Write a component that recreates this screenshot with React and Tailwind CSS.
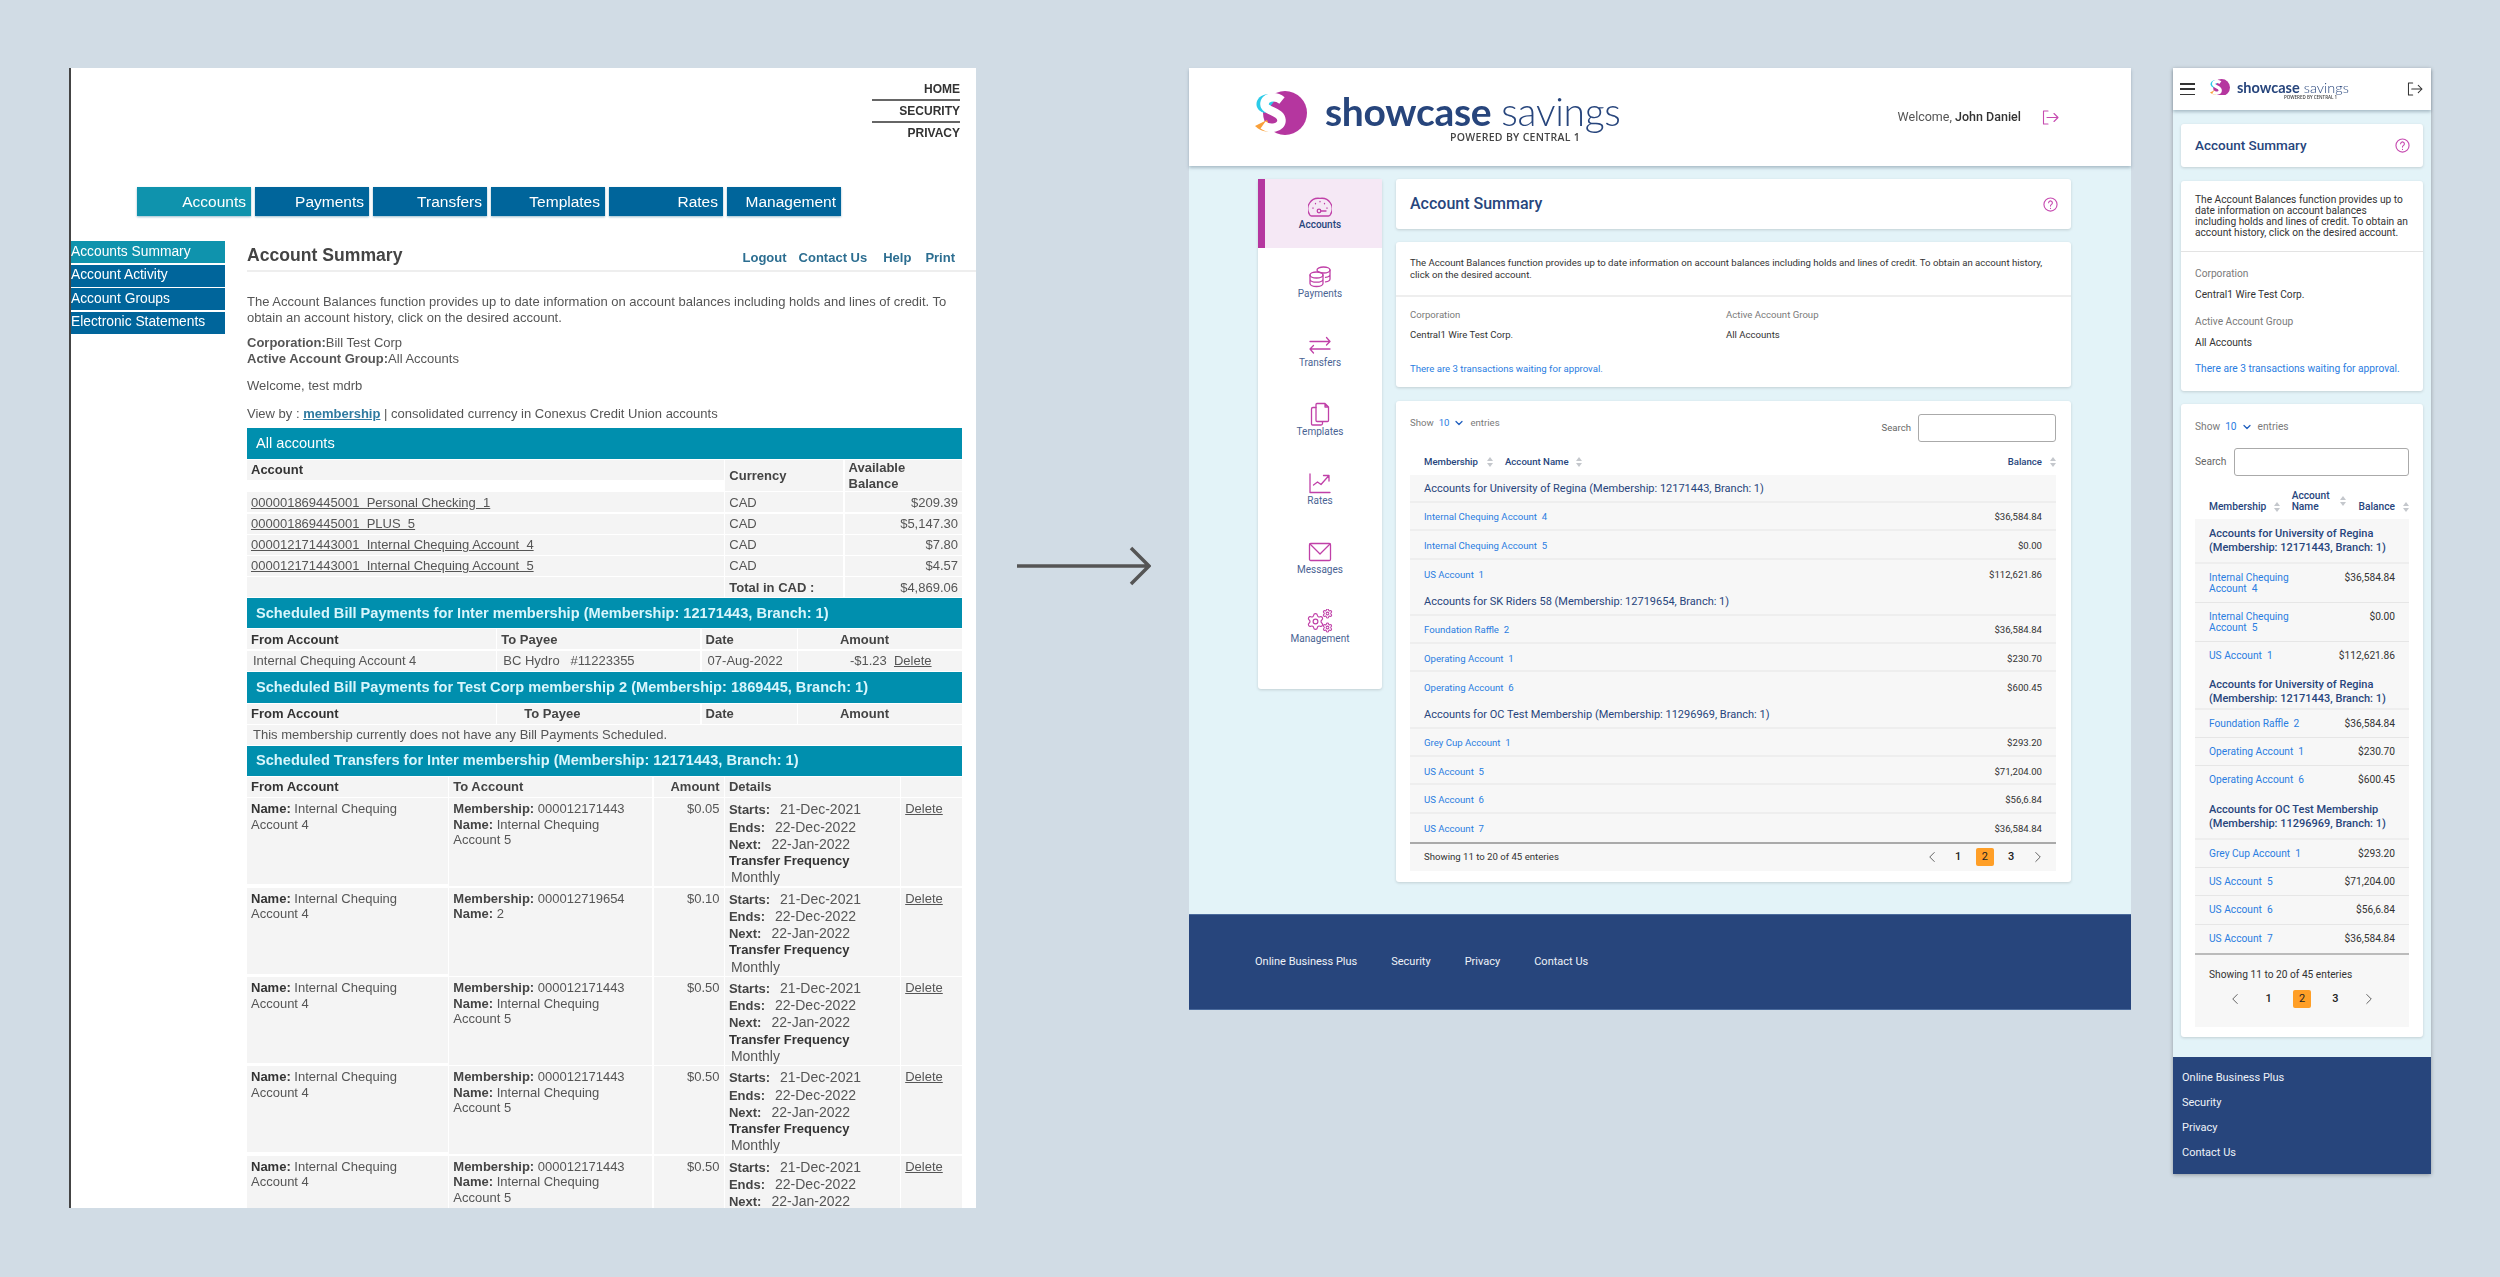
import React from 'react';
import { Settings, ChevronLeft, ChevronRight, ChevronDown } from 'lucide-react';

// accounts shown in both the desktop and the phone layout
const groups = [
  { title: 'Accounts for University of Regina (Membership: 12171443, Branch: 1)', rows: [['Internal Chequing Account  4', '$36,584.84'], ['Internal Chequing Account  5', '$0.00'], ['US Account  1', '$112,621.86']] },
  { title: 'Accounts for SK Riders 58 (Membership: 12719654, Branch: 1)', mobileTitle: 'Accounts for University of Regina (Membership: 12171443, Branch: 1)', rows: [['Foundation Raffle  2', '$36,584.84'], ['Operating Account  1', '$230.70'], ['Operating Account  6', '$600.45']] },
  { title: 'Accounts for OC Test Membership (Membership: 11296969, Branch: 1)', rows: [['Grey Cup Account  1', '$293.20'], ['US Account  5', '$71,204.00'], ['US Account  6', '$56,6.84'], ['US Account  7', '$36,584.84']] },
];

const transfers = [
  { to: '000012171443', name: 'Internal Chequing Account 5', amount: '$0.05' },
  { to: '000012719654', name: '2', amount: '$0.10' },
  { to: '000012171443', name: 'Internal Chequing Account 5', amount: '$0.50' },
  { to: '000012171443', name: 'Internal Chequing Account 5', amount: '$0.50' },
  { to: '000012171443', name: 'Internal Chequing Account 5', amount: '$0.50' },
];

function Logo({ width }) {
  return (
    <svg width={width} viewBox="0 0 52 44" className="shrink-0">
      <circle cx="30" cy="22" r="22" fill="#b5369f" />
      <path d="M14 3C6 3 1 8 1.500 14C2 18 5 21 10 22L21 8Z" fill="#2bcbe8" />
      <path d="M0 35C3 38 8 41 17 41L12 29Z" fill="#f9a03a" />
      <path d="M27 9.500C20 4 9 6 9.500 13.500C10 20.500 26 20 26.500 29C27 37 15 39 8 34" fill="none" stroke="#fff" strokeWidth="8.500" />
    </svg>
  );
}

function NavIcon({ name }) {
  const common = { width: 24, height: 24, viewBox: '0 0 24 24', fill: 'none', stroke: '#c040a8', strokeWidth: 1.3, strokeLinecap: 'round', strokeLinejoin: 'round' };
  if (name === 'Accounts') return (
    <svg {...common}>
      <path d="M3.500 21a2 2 0 0 1-2-1.600 10.500 10.500 0 0 1 10.500-16 10.500 10.500 0 0 1 10.500 16 2 2 0 0 1-2 1.600z" />
      <circle cx="11" cy="16" r="1.800" />
      <path d="M12.800 16H18M12 6.500v.3M7.500 8.500v.3M16.500 8.500v.3M5 13v.3M19 13v.3" />
    </svg>
  );
  if (name === 'Payments') return (
    <svg {...common}>
      <ellipse cx="15.500" cy="6" rx="6.500" ry="3" />
      <path d="M22 6v9c0 1.500-2 2.600-4.500 2.900M22 10.500c0 1.500-2 2.600-4.500 2.900" />
      <ellipse cx="8.500" cy="11" rx="6.500" ry="3" />
      <path d="M2 11v8.500c0 1.700 3 3 6.500 3s6.500-1.300 6.500-3V11M2 15.200c0 1.700 3 3 6.500 3s6.500-1.300 6.500-3" />
    </svg>
  );
  if (name === 'Transfers') return (
    <svg {...common}>
      <path d="M2 8.500h20M18.500 4.500l3.500 4-3.500 3.500M22 16H2M5.500 12.500L2 16l3.500 4" />
    </svg>
  );
  if (name === 'Templates') return (
    <svg {...common}>
      <path d="M9 1.500h8l3.500 3.500v13.500a1 1 0 0 1-1 1H9a1 1 0 0 1-1-1v-16a1 1 0 0 1 1-1zM17 1.500V5h3.500" />
      <path d="M8 5.500H5a1.500 1.500 0 0 0-1.500 1.500v15a1 1 0 0 0 1 1H13a1.500 1.500 0 0 0 1.500-1.500V20" />
    </svg>
  );
  if (name === 'Rates') return (
    <svg {...common}>
      <path d="M2 3v18.500h20M5.500 14l4-3 3.500 2.500L20.500 5M15.500 4.500h5.500V10" />
    </svg>
  );
  if (name === 'Messages') return (
    <svg {...common}>
      <rect x="1.500" y="3.500" width="21" height="17" rx="1.200" />
      <path d="M2 4l10 10 10-10" />
    </svg>
  );
  return (
    <svg {...common} width={28} viewBox="0 0 28 24">
      <Settings x="0" y="3" width="19" height="19" strokeWidth="1.500" stroke="#c040a8" />
      <Settings x="16" y="-1" width="11" height="11" strokeWidth="2.200" stroke="#c040a8" />
      <Settings x="16" y="13" width="11" height="11" strokeWidth="2.200" stroke="#c040a8" />
    </svg>
  );
}

function HelpIcon() {
  return (
    <svg width="15" height="15" viewBox="0 0 24 24" fill="none" stroke="#c64bb0" strokeWidth="1.800" strokeLinecap="round">
      <circle cx="12" cy="12" r="10.500" />
      <path d="M9 9.300a3 3 0 1 1 4.600 2.500c-1 .7-1.600 1.300-1.600 2.700M12 18v.2" />
    </svg>
  );
}

function LogoutIcon({ color, width, height }) {
  return (
    <svg width={width} height={height} viewBox="0 0 17 15" fill="none" stroke={color} strokeWidth="1.100" strokeLinecap="round" strokeLinejoin="round">
      <path d="M6 1H1.500v13H6M5 7.500h11M12 3.500l4 4-4 4" />
    </svg>
  );
}

function SortIcon() {
  return (
    <svg width="6" height="10" viewBox="0 0 6 10" fill="#c4c7cc" className="shrink-0">
      <path d="M3 0l3 4H0zM3 10L0 6h6z" />
    </svg>
  );
}

function Pagination({ pitch }) {
  const cell = `flex items-center justify-center ${pitch}`;
  return (
    <div className="flex items-center text-[11px] font-medium text-[#222]">
      <span className={cell}><ChevronLeft size={18} strokeWidth={1.100} className="text-[#444]" /></span>
      <span className={cell}>1</span>
      <span className={cell}><span className="flex h-[18px] w-[18px] items-center justify-center rounded-[2px] bg-[#ff9f27] font-normal">2</span></span>
      <span className={cell}>3</span>
      <span className={cell}><ChevronRight size={18} strokeWidth={1.100} className="text-[#444]" /></span>
    </div>
  );
}

function ShowEntries() {
  return (
    <div className="flex items-center text-[#7a7a7a]">
      <span>Show</span>
      <span className="ml-[5px] text-[#2a7de1]">10</span>
      <ChevronDown size={12} strokeWidth={2.500} className="ml-[4px] text-[#1f5fbf]" />
      <span className="ml-[5px]">entries</span>
    </div>
  );
}

/* ---------- old site, left side ---------- */

function OldPanel() {
  const tabs = ['Accounts', 'Payments', 'Transfers', 'Templates', 'Rates', 'Management'];
  const side = ['Accounts Summary', 'Account Activity', 'Account Groups', 'Electronic Statements'];
  const accounts = [
    ['000001869445001  Personal Checking  1', '$209.39'],
    ['000001869445001  PLUS  5', '$5,147.30'],
    ['000012171443001  Internal Chequing Account  4', '$7.80'],
    ['000012171443001  Internal Chequing Account  5', '$4.57'],
  ];
  const band = 'flex items-center bg-[#008fae] pl-[9px] text-[14.600px] font-bold text-[#d8f6fc]';
  const cell = 'bg-[#f4f4f4] px-[4px] flex items-center';
  return (
    <div className="h-[1140px] w-[907px] shrink-0 overflow-hidden border-l-2 border-[#444] bg-white font-['Liberation_Sans',sans-serif] text-[#555] blur-[0.6px]">
      <div className="flex flex-col items-end pr-[16px] pt-[11px] text-[12px] font-bold text-[#333]">
        <div className="h-[22px] w-[88px] border-b-2 border-[#666] text-right leading-[21px]">HOME</div>
        <div className="h-[22px] w-[88px] border-b-2 border-[#666] text-right leading-[21px]">SECURITY</div>
        <div className="h-[21px] w-[88px] text-right leading-[21px]">PRIVACY</div>
      </div>

      <div className="ml-[66px] mt-[43px] flex gap-[4px]">
        {tabs.map((t, i) => (
          <div key={t} className={`flex h-[29px] w-[114px] items-center justify-end pr-[5px] text-[15.500px] text-white shadow-[0_1px_2px_rgba(0,90,130,0.4)] ${i === 0 ? 'bg-[#0f93ad]' : 'bg-[#00659b]'}`}>{t}</div>
        ))}
      </div>

      <div className="mt-[25px] flex">
        <div className="flex w-[154px] shrink-0 flex-col gap-[1.500px]">
          {side.map((s, i) => (
            <div key={s} className={`flex h-[22px] items-center text-[13.800px] text-white ${i === 0 ? 'bg-[#0f93ad]' : 'bg-[#00659b]'}`}>{s}</div>
          ))}
        </div>

        <div className="ml-[22px] w-[729px]">
          <div className="flex h-[31px] items-center justify-between border-b-2 border-[#eee] pr-[21px]">
            <h1 className="text-[17.600px] font-bold text-[#444]">Account Summary</h1>
            <div className="flex pt-[5px] text-[13px] font-bold text-[#2c6e91]">
              <span>Logout</span><span className="ml-[12px]">Contact Us</span><span className="ml-[16px]">Help</span><span className="ml-[14px]">Print</span>
            </div>
          </div>

          <div className="w-[715px] text-[13px] leading-[15.500px]">
            <p className="mt-[22px]">The Account Balances function provides up to date information on account balances including holds and lines of credit. To obtain an account history, click on the desired account.</p>
            <p className="mt-[10px] leading-[16px]"><b>Corporation:</b>Bill Test Corp<br /><b>Active Account Group:</b>All Accounts</p>
            <p className="mt-[11px] leading-[16px]">Welcome, test mdrb</p>
            <p className="mt-[12px] leading-[16px]">View by : <b className="font-bold text-[#2f7aa0] underline">membership</b> | consolidated currency in Conexus Credit Union accounts</p>

            <div className={`${band} mt-[6px] h-[31px] font-normal text-white`}>All accounts</div>
            <div className="mt-[1px] grid grid-cols-[477px_118px_1fr] gap-[1.300px]">
              <div className={`${cell} h-[20px] font-bold text-[#333]`}>Account</div>
              <div className={`${cell} font-bold text-[#444]`}>Currency</div>
              <div className={`${cell} justify-end font-bold text-[#444]`}>Available Balance</div>
              {accounts.map(([a, b]) => (
                <React.Fragment key={a}>
                  <div className={`${cell} h-[20px] whitespace-pre underline`}>{a}</div>
                  <div className={cell}>CAD</div>
                  <div className={`${cell} justify-end`}>{b}</div>
                </React.Fragment>
              ))}
              <div className={`${cell} h-[20px]`} />
              <div className={`${cell} font-bold text-[#444]`}>Total in CAD :</div>
              <div className={`${cell} justify-end`}>$4,869.06</div>
            </div>

            <div className={`${band} mt-[1px] h-[30px]`}>Scheduled Bill Payments for Inter membership (Membership: 12171443, Branch: 1)</div>
            <div className="mt-[1px] grid grid-cols-[249px_203px_95px_1fr] gap-[1.300px]">
              <div className={`${cell} h-[20px] font-bold text-[#333]`}>From Account</div>
              <div className={`${cell} font-bold text-[#444]`}>To Payee</div>
              <div className={`${cell} font-bold text-[#444]`}>Date</div>
              <div className={`${cell} pl-[42px] font-bold text-[#444]`}>Amount</div>
              <div className={`${cell} h-[20px] pl-[6px]`}>Internal Chequing Account 4</div>
              <div className={`${cell} pl-[6px] whitespace-pre`}>BC Hydro   #11223355</div>
              <div className={`${cell} pl-[6px]`}>07-Aug-2022</div>
              <div className={`${cell} pl-[52px] whitespace-pre`}>-$1.23  <span className="underline">Delete</span></div>
            </div>

            <div className={`${band} mt-[1px] h-[31px]`}>Scheduled Bill Payments for Test Corp membership 2 (Membership: 1869445, Branch: 1)</div>
            <div className="mt-[1px] grid grid-cols-[249px_203px_95px_1fr] gap-[1.300px]">
              <div className={`${cell} h-[20px] font-bold text-[#333]`}>From Account</div>
              <div className={`${cell} pl-[27px] font-bold text-[#444]`}>To Payee</div>
              <div className={`${cell} font-bold text-[#444]`}>Date</div>
              <div className={`${cell} pl-[42px] font-bold text-[#444]`}>Amount</div>
              <div className={`${cell} col-span-4 h-[20px] pl-[6px]`}>This membership currently does not have any Bill Payments Scheduled.</div>
            </div>

            <div className={`${band} mt-[1px] h-[30px]`}>Scheduled Transfers for Inter membership (Membership: 12171443, Branch: 1)</div>
            <div className="mt-[1px] grid grid-cols-[201px_203px_70px_175px_1fr] gap-[1.300px]">
              <div className={`${cell} h-[20px] font-bold text-[#333]`}>From Account</div>
              <div className={`${cell} font-bold text-[#444]`}>To Account</div>
              <div className={`${cell} justify-end font-bold text-[#444]`}>Amount</div>
              <div className={`${cell} font-bold text-[#444]`}>Details</div>
              <div className={cell} />
              {transfers.map((t, i) => (
                <React.Fragment key={i}>
                  <div className="h-[86px] bg-[#f4f4f4] px-[4px] pt-[3px]"><b className="text-[#333]">Name:</b> Internal Chequing Account 4</div>
                  <div className="bg-[#f4f4f4] px-[4px] pt-[3px]"><b className="text-[#444]">Membership:</b> {t.to}<br /><b className="text-[#444]">Name:</b> {t.name}</div>
                  <div className="bg-[#f4f4f4] px-[4px] pt-[3px] text-right">{t.amount}</div>
                  <div className="bg-[#f4f4f4] px-[4px] pt-[3px] leading-[16.200px]">
                    <b className="text-[#444]">Starts:</b><span className="ml-[10px] text-[14px]">21-Dec-2021</span><br />
                    <b className="text-[#444]">Ends:</b><span className="ml-[10px] text-[14px]">22-Dec-2022</span><br />
                    <b className="text-[#444]">Next:</b><span className="ml-[10px] text-[14px]">22-Jan-2022</span><br />
                    <b className="text-[#333]">Transfer Frequency</b><br />
                    <span className="ml-[2px] text-[14px]">Monthly</span>
                  </div>
                  <div className="bg-[#f4f4f4] px-[4px] pt-[3px] underline">Delete</div>
                </React.Fragment>
              ))}
            </div>
          </div>
        </div>
      </div>
    </div>
  );
}

/* ---------- redesign, desktop ---------- */

function DesktopPanel() {
  const nav = ['Accounts', 'Payments', 'Transfers', 'Templates', 'Rates', 'Messages', 'Management'];
  const card = 'rounded-[3px] bg-white shadow-[0_1px_3px_rgba(0,0,0,0.15)]';
  return (
    <div className="w-[942px] shrink-0 font-['Roboto',sans-serif] text-[9.600px] text-[#333] blur-[0.3px]">
      <header className="relative z-10 flex h-[98px] items-center justify-between bg-white pl-[66px] pr-[72px] shadow-[0_2px_3px_rgba(60,90,110,0.35)]">
        <div className="flex items-start gap-[18px]">
          <Logo width={52} />
          <div>
            <div className="whitespace-nowrap font-['Lato',sans-serif] text-[39px] leading-[40px] tracking-[-0.3px] text-[#27457c]">
              <span className="font-bold">showcase</span><span className="ml-[10px] font-light">savings</span>
            </div>
            <div className="ml-[125px] whitespace-nowrap font-['Open_Sans',sans-serif] text-[10.500px] font-semibold leading-[13px] tracking-[0.3px] text-[#444]">POWERED BY CENTRAL 1</div>
          </div>
        </div>
        <div className="flex items-center text-[12.500px]">
          <span className="text-[#555]">Welcome, <span className="font-medium text-[#333]">John Daniel</span></span>
          <span className="ml-[21px]"><LogoutIcon color="#c64bb0" width={17} height={15} /></span>
        </div>
      </header>

      <div className="flex h-[748px] items-start gap-[13.500px] bg-[#e3f3f8] pl-[69px] pt-[13px]">
        <nav className={`${card} w-[124px] shrink-0 pb-[27px]`}>
          {nav.map((n, i) => (
            <div key={n} className={`flex h-[69px] flex-col items-center pt-[17px] ${i === 0 ? 'border-l-[7px] border-[#b5369f] bg-[#f5e8f5] pr-[7px] font-medium text-[#27457c]' : 'text-[#4a6393]'}`}>
              <div className="flex h-[22px] items-center"><NavIcon name={n} /></div>
              <div className="text-[10px] leading-[14px]">{n}</div>
            </div>
          ))}
        </nav>

        <main className="w-[675px] shrink-0">
          <div className={`${card} flex h-[50px] items-center justify-between pl-[14.500px] pr-[13px]`}>
            <h2 className="text-[16px] font-medium text-[#27457c]">Account Summary</h2>
            <HelpIcon />
          </div>

          <div className={`${card} mt-[13px] h-[145px]`}>
            <p className="border-b-2 border-[#eee] px-[14.500px] pb-[13px] pt-[15px] leading-[12.300px]">The Account Balances function provides up to date information on account balances including holds and lines of credit. To obtain an account history, click on the desired account.</p>
            <div className="grid grid-cols-[316px_1fr] px-[14.500px] pt-[11px] leading-[14px]">
              <div className="text-[#7a7a7a]">Corporation</div>
              <div className="text-[#7a7a7a]">Active Account Group</div>
              <div className="mt-[6px]">Central1 Wire Test Corp.</div>
              <div className="mt-[6px]">All Accounts</div>
            </div>
            <div className="mt-[20px] px-[14.500px] leading-[14px] text-[#2a7de1]">There are 3 transactions waiting for approval.</div>
          </div>

          <div className={`${card} mt-[14px] h-[481px] px-[14.500px] pt-[13px]`}>
            <div className="flex items-start justify-between">
              <div className="flex h-[18px] items-center"><ShowEntries /></div>
              <div className="flex items-center gap-[7px] text-[#666]">
                <span>Search</span>
                <input className="h-[28px] w-[138px] rounded-[3px] border-[1.500px] border-[#aaa] bg-white" />
              </div>
            </div>
            <div className="flex h-[33px] items-center pl-[14px] pt-[7px] font-medium text-[#27457c]">
              <span className="flex w-[81px] items-center gap-[9px]">Membership<SortIcon /></span>
              <span className="flex items-center gap-[7px]">Account Name<SortIcon /></span>
              <span className="ml-auto flex items-center gap-[8px]">Balance<SortIcon /></span>
            </div>
            {groups.map((g) => (
              <div key={g.title}>
                <div className="flex h-[28px] items-center border-b-2 border-[#eee] bg-[#f7f7f7] px-[14px] pt-[3px] text-[11px] text-[#27457c]">{g.title}</div>
                {g.rows.map(([name, bal]) => (
                  <div key={name} className="flex h-[28.300px] items-center justify-between border-b-2 border-[#eee] bg-[#f7f7f7] px-[14px] pt-[3px] last:border-b-0">
                    <span className="whitespace-pre text-[#2a7de1]">{name}</span>
                    <span>{bal}</span>
                  </div>
                ))}
              </div>
            ))}
            <div className="flex h-[29px] items-center justify-between border-t-2 border-[#aaa] bg-[#f7f7f7] pl-[14px] pr-[5px]">
              <span>Showing 11 to 20 of 45 enteries</span>
              <Pagination pitch="w-[26.500px]" />
            </div>
          </div>
        </main>
      </div>

      <footer className="flex h-[96px] items-center gap-[34px] border-y border-[#4a6a9c] bg-[#27457c] pl-[66px] text-[11px] text-[#eef2f8]">
        <span>Online Business Plus</span><span>Security</span><span>Privacy</span><span>Contact Us</span>
      </footer>
    </div>
  );
}

/* ---------- redesign, phone ---------- */

function MobilePanel() {
  const card = 'rounded-[3px] bg-white shadow-[0_1px_3px_rgba(0,0,0,0.15)]';
  return (
    <div className="w-[258px] shrink-0 font-['Roboto',sans-serif] text-[10.200px] text-[#333] shadow-[0_1px_4px_rgba(0,0,0,0.3)] blur-[0.3px]">
      <header className="relative z-10 flex h-[42px] items-center bg-white pl-[7px] pr-[8px] shadow-[0_2px_3px_rgba(60,90,110,0.35)]">
        <div className="flex h-[12px] w-[15px] flex-col justify-between">
          <span className="h-[1.500px] bg-[#333]" /><span className="h-[1.500px] bg-[#333]" /><span className="h-[1.500px] bg-[#333]" />
        </div>
        <div className="ml-[15px] flex items-start gap-[7px]">
          <Logo width={20} />
          <div className="pt-[1px]">
            <div className="whitespace-nowrap font-['Lato',sans-serif] text-[14.500px] leading-[15px] text-[#27457c]">
              <span className="font-bold">showcase</span><span className="ml-[4px] font-light">savings</span>
            </div>
            <div className="ml-[47px] whitespace-nowrap font-['Open_Sans',sans-serif] text-[4.500px] font-semibold leading-[5px] text-[#444]">POWERED BY CENTRAL 1</div>
          </div>
        </div>
        <span className="ml-auto"><LogoutIcon color="#333" width={16} height={14} /></span>
      </header>

      <div className="bg-[#e3f3f8] px-[8px] pb-[20px] pt-[14px]">
        <div className={`${card} flex h-[43px] items-center justify-between pl-[14px] pr-[13px]`}>
          <h2 className="text-[13.500px] font-medium text-[#27457c]">Account Summary</h2>
          <HelpIcon />
        </div>

        <div className={`${card} mt-[14px] h-[210px]`}>
          <p className="border-b border-[#e3e3e3] px-[14px] pb-[13px] pt-[13px] leading-[11px]">The Account Balances function provides up to date information on account balances including holds and lines of credit. To obtain an account history, click on the desired account.</p>
          <div className="px-[14px] pt-[15px] leading-[14px]">
            <div className="text-[#7a7a7a]">Corporation</div>
            <div className="mt-[7px]">Central1 Wire Test Corp.</div>
            <div className="mt-[13px] text-[#7a7a7a]">Active Account Group</div>
            <div className="mt-[7px]">All Accounts</div>
            <div className="mt-[12px] text-[#2a7de1]">There are 3 transactions waiting for approval.</div>
          </div>
        </div>

        <div className={`${card} mt-[13px] h-[633px] px-[14px] pt-[14px]`}>
          <div className="flex h-[18px] items-center"><ShowEntries /></div>
          <div className="mt-[12px] flex items-center gap-[8px] text-[#666]">
            <span>Search</span>
            <input className="h-[28px] w-[177px] rounded-[3px] border-[1.500px] border-[#aaa] bg-white" />
          </div>
          <div className="flex h-[43px] items-end pb-[7px] pl-[14px] font-medium leading-[11px] text-[#27457c]">
            <span className="flex w-[84px] items-center gap-[8px]">Membership<SortIcon /></span>
            <span className="flex w-[68px] items-center gap-[10px]"><span className="w-[38px]">Account Name</span><SortIcon /></span>
            <span className="ml-auto flex items-center gap-[8px]">Balance<SortIcon /></span>
          </div>
          {groups.map((g) => (
            <div key={g.title}>
              <div className={`border-b-2 border-[#eee] bg-[#f7f7f7] px-[14px] pt-[8px] text-[11px] font-medium leading-[14px] text-[#27457c] ${g.mobileTitle ? 'pb-[1.500px]' : 'pb-[7px]'}`}>{g.mobileTitle || g.title}</div>
              {g.rows.map(([name, bal]) => (
                <div key={name} className="flex min-h-[28.300px] items-start justify-between border-b border-[#e6e6e6] bg-[#f7f7f7] px-[14px] py-[8px] leading-[11px] last:border-b-0">
                  <span className="w-[105px] whitespace-pre-wrap text-[#2a7de1]">{name}</span>
                  <span>{bal}</span>
                </div>
              ))}
            </div>
          ))}
          <div className="h-[74px] border-t-2 border-[#bbb] bg-[#f7f7f7] px-[14px] pt-[12px]">
            <div>Showing 11 to 20 of 45 enteries</div>
            <div className="mt-[8px] flex justify-center"><Pagination pitch="w-[33.400px]" /></div>
          </div>
        </div>
      </div>

      <footer className="flex h-[117px] flex-col justify-center gap-[11px] bg-[#27457c] pl-[9px] text-[11px] leading-[14px] text-[#eef2f8]">
        <span>Online Business Plus</span><span>Security</span><span>Privacy</span><span>Contact Us</span>
      </footer>
    </div>
  );
}

export default function App() {
  return (
    <div className="flex h-[1277px] w-[2500px] items-start overflow-hidden bg-[#d1dce5] pl-[69px] pt-[68px]">
      <OldPanel />
      <svg width="134" height="40" viewBox="0 0 134 40" className="ml-[41px] mt-[478px] shrink-0" fill="none" stroke="#555" strokeWidth="3.500">
        <path d="M0 20h132M114 2l18 18-18 18" />
      </svg>
      <div className="ml-[38px]"><DesktopPanel /></div>
      <div className="ml-[42px]"><MobilePanel /></div>
    </div>
  );
}
